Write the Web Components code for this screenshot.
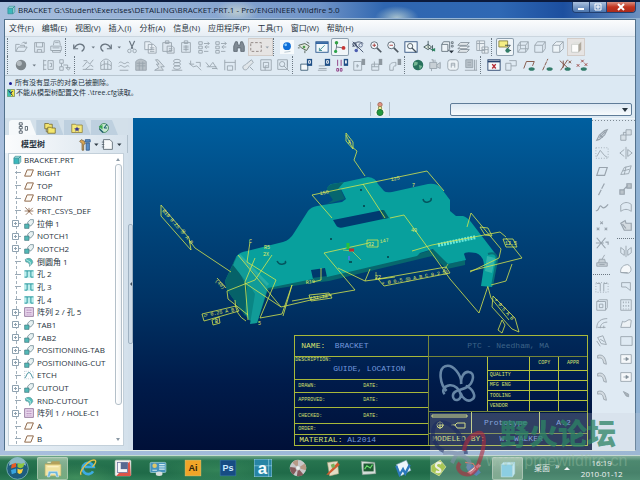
<!DOCTYPE html>
<html lang="zh-CN">
<head>
<meta charset="utf-8">
<title>BRACKET - Pro/ENGINEER Wildfire 5.0</title>
<style>
  html, body { height: 100%; }
  body {
    margin: 0;
    overflow: hidden;
    font: 8px/12px "Open Sans", "Noto Sans CJK SC", sans-serif;
    color: #26323d;
  }
</style>
</head>
<body>
<desk-top>
  <app-window slot="window"></app-window>
  <task-bar slot="bar"></task-bar>
  <forum-mark slot="mark"></forum-mark>
</desk-top>

<script>
// all icons live on a 16x16 grid; stroke follows the text colour
const ICONS = {
  open: '<path d="M2 13V5h4l1 1h5v2M2 13l3-5h10l-3 5zM9 4c1-2 4-2 5 0m0-2v2h-2" fill="none"/>',
  save: '<path d="M3 3h11v11H3zM5 3v5h7V3M6 14v-3h5v3" fill="none"/>',
  print: '<path d="M5 6l1-5h6l1 5M2 7h12v5H2zM4 12h9v2H4zM4 9h8M7 3h4" fill="none"/>',
  undo: '<path d="M2 5v5h5M3 9c2-5 9-6 11-1 0 2-1 4-3 5" fill="none" stroke="#68747f" stroke-width="1.4"/>',
  redo: '<path d="M14 5v5H9M13 9C11 4 4 3 2 8c0 2 1 4 3 5" fill="none" stroke="#68747f" stroke-width="1.4"/>',
  caret: '<path d="M5 7h7l-3.5 4z" fill="currentColor" stroke="none"/>',
  cut: '<path d="M5 1l4 9M11 1L7 10" fill="none" stroke="#68747f" stroke-width="1.4"/><circle cx="5" cy="12.500" r="2" fill="none"/><circle cx="11" cy="12.500" r="2" fill="none"/>',
  copy: '<path d="M2 2h6l2 2v7H2zM6 5h6l3 3v7H6zM8 9h5M8 11h5M8 13h5" fill="#e9f0f6"/>',
  paste: '<path d="M2 3h10v10H2zM5 1h4v3H5zM7 7h6l2 2v6H7zM9 10h4M9 12h4" fill="#dde6ee"/>',
  pasteOther: '<path d="M3 3h10v11H3zM6 1h4v3H6zM5 7h6M5 9h6M5 11h6M8 6v7" fill="none"/>',
  regen: '<path d="M2 2h4v3H2zM2 7h4v3H2zM2 12h4v3H2zM8 4h6m-2-2 2 2-2 2M8 13h5M14 8H9m2-2-2 2 2 2" fill="none"/>',
  find: '<path d="M2 13V7l2-5h2l1 4h2l1-4h2l2 5v6h-4V9H6v4z" fill="#7f8a94" stroke="#5e6973"/>',
  marquee: '<path d="M2 3h12v10H2z" fill="none" stroke="#8a7f7c" stroke-dasharray="3 2"/>',
  ball: '<rect width="16" height="16" fill="#f6fafc" stroke="none"/><circle cx="8" cy="7" r="4.500" fill="#1270d8" stroke="none"/><circle cx="6.500" cy="5.500" r="1.500" fill="#8fd0ff" stroke="none"/><path d="M5 14l7-1" stroke="#b4c3ce"/>',
  spin: '<path d="M2 6l7-2 5 3-3 5-6-3zM3 9H1M9 12v3M11 2l3 2" fill="#dfe8dc" stroke="#4b5a4c"/><circle cx="8" cy="8" r="1.500" fill="#4c9a4d" stroke="none"/>',
  orient: '<rect x="1" y="2" width="14" height="12" fill="#f2f8fb" stroke="#20508a"/><path d="M1 3.500h14" stroke="#245a9b" stroke-width="2"/><path d="M5 12l6-6M5 9v3h3" stroke="#338a8f" fill="none"/>',
  nodes: '<path d="M4 3v5l8 1M4 8l-1 5" fill="none" stroke="#60717c"/><circle cx="4" cy="3" r="2" fill="#31a043" stroke="none"/><circle cx="12" cy="9" r="2.200" fill="#c63535" stroke="none"/><circle cx="3" cy="13" r="1.800" fill="#2ba34a" stroke="none"/>',
  spinCenter: '<path d="M2 2l12 12M2 8c3-8 9-6 12-4M5 5l3 5" fill="none" stroke="#3b4965"/><circle cx="4" cy="5" r="2" fill="none" stroke="#3b4965"/><circle cx="11" cy="6" r="2" fill="none" stroke="#59688a"/><circle cx="6" cy="12" r="2" fill="#4b5cb0" stroke="none"/>',
  zoomIn: '<circle cx="6" cy="6" r="4" fill="#f4fafd" stroke="#53606b"/><path d="M4 6h4M6 4v4" stroke="#a33636"/><path d="M9 9l5 5" stroke="#4f5962" stroke-width="2"/>',
  zoomOut: '<circle cx="6" cy="6" r="4" fill="#f4fafd" stroke="#53606b"/><path d="M4 6h4" stroke="#a33636"/><path d="M9 9l5 5" stroke="#4f5962" stroke-width="2"/>',
  refit: '<rect x="1" y="2" width="14" height="12" fill="#f2f8fb" stroke="#2e4f7c"/><circle cx="7" cy="7" r="3" fill="none" stroke="#46525c"/><path d="M9 9l5 5" stroke="#46525c" stroke-width="1.600"/>',
  reorient: '<path d="M2 8l5-3 4 3-4 3zM7 1v8M7 9l7 3M12 6v7" fill="#e1ecdf" stroke="#3f5359"/><path d="M10 11l5-2v4z" fill="#2f8b64" stroke="none"/>',
  saved: '<path d="M2 5h7v8H2zM2 5l2-3h7v8l-2 3M13 2h2v2h-2zM13 6h2v2h-2z" fill="#eef4f8" stroke="#64717b"/><path d="M10 12h6l-3 3z" fill="#2a3540" stroke="none"/>',
  layers: '<path d="M4 3h10l-3 3H1zM4 7h10l-3 3H1zM4 11h10l-3 3H1z" fill="#edf2f5" stroke="#7b8790"/>',
  viewMgr: '<path d="M2 1h9v11H2zM2 4h9M5 1v11M8 8h7v7H8zM8 11h7M11 8v7" fill="#eaf0f4"/>',
  note: '<path d="M1 1h10v7H1z" fill="#f5ee84" stroke="#85803f"/><path d="M8 6h6l-5 6M12 12h3" stroke="#31434a" fill="none"/><circle cx="11" cy="12" r="2.500" fill="#317c66" stroke="none"/>',
  wire: '<path d="M2 6h9v8H2zM5 2h9v8H5zM2 6l3-4M11 6l3-4M2 14l3-4M11 14l3-4" fill="none"/>',
  hidden: '<path d="M2 6h9v8H2zM2 6l3-4h9v8l-3 4M11 6l3-4" fill="none"/>',
  noHidden: '<path d="M2 6h8v8H2zM2 6l4-4h8l-4 4M14 2v8l-4 4" fill="#edf4f8"/>',
  shade: '<path d="M3 5h8v9H3z" fill="#fdfdfc" stroke="#c4c8c5"/><path d="M3 5l3-3h8l-3 3z" fill="#e0e1de" stroke="none"/><path d="M11 5l3-3v9l-3 3z" fill="#afa99d" stroke="none"/>',
  sphere: '<circle cx="8" cy="8" r="6" fill="#7d868b" stroke="none"/><circle cx="6" cy="6" r="3" fill="#b2babf" stroke="none"/>',
  partList: '<path d="M3 2v12M3 3h3M3 8h3M3 13h3M8 3h6v10H8zM10 6h2v4h-2" fill="none"/>',
  flow: '<path d="M2 2h4v4H2zM2 10h4v4H2zM4 6v4M6 8h5v4M9 11h5l-2 3z" fill="none"/>',
  analyse: '<path d="M2 13h12M2 10l5-6 3 3 4-5M3 3h4M5 13l6-5 3 2" fill="none"/>',
  mesh: '<path d="M2 5c4-5 8-5 12 0v8H2zM2 9c4-3 8-3 12 0M6 3v10M10 3v10" fill="none"/>',
  wave: '<path d="M2 6c3-4 5 2 8 0 2-2 3-1 4 0M2 10c3-4 5 2 8 0 2-2 3-1 4 0M3 14h10" fill="none"/>',
  hatch: '<path d="M2 4c4-4 8-3 12 0v10H2z" fill="#b7c0c7"/><path d="M3 6h10M3 9h10M6 4v10M10 4v10" fill="none"/>',
  stair: '<path d="M3 14h10l-3-4h4L7 2H4l4 5H5l3 4z" fill="#d6dfe6"/>',
  coil: '<ellipse cx="8" cy="3.500" rx="4" ry="2" fill="none"/><ellipse cx="8" cy="7" rx="4" ry="2" fill="none"/><ellipse cx="8" cy="11" rx="4" ry="2" fill="none"/><path d="M2 14h12" fill="none"/>',
  dims: '<path d="M1 6l5 4 4-1 5 5M3 3v4h4M9 5h5v5" fill="none"/>',
  dims2: '<path d="M1 5l4 5 4-5 5 8M2 10h11M8 12h6" fill="none"/>',
  span: '<path d="M2 2v12M14 2v12M2 5h12M5 9h6v5H5z" fill="none"/>',
  brush: '<path d="M3 13c-3-5 2-4 4-7l5-4 2 3-5 5c-2 4-4 4-6 3zM10 10l4 4" fill="#e0e6ea"/>',
  frame: '<path d="M2 2h12v12H2zM5 5h6v6H5zM7 14v-5h3" fill="none"/>',
  frameFind: '<path d="M2 2h11v11H2z" fill="none"/><circle cx="7" cy="7" r="3" fill="none"/><path d="M9 9l6 6M13 3v7" fill="none"/>',
  flagBox: '<path d="M2 7h8v7H2z" fill="#f4f8fa" stroke="#3d5d75"/><rect x="9" y="1" width="6" height="8" fill="#1f4f86" stroke="none"/><path d="M11 3h2v3h-2z" fill="none" stroke="#fff"/>',
  flagBar: '<path d="M2 12h9M2 9h7M1 14h10" fill="none"/><rect x="9" y="1" width="6" height="8" fill="#1f4f86" stroke="none"/><path d="M11 3h2v3h-2z" fill="none" stroke="#fff"/>',
  flagDims: '<path d="M3 2v7M7 2v7M2 12h2v3H2zM6 12h2v3H6z" fill="none" stroke="#8b367f"/><rect x="10" y="1" width="5" height="8" fill="#1f4f86" stroke="none"/><path d="M12 3h1v3h-1z" fill="none" stroke="#fff"/>',
  flagDoc: '<path d="M2 4h9v10H2zM5 9h3M6 7v4" fill="none"/><rect x="11" y="1" width="4" height="7" fill="#8d979f" stroke="none"/>',
  flagGrid: '<path d="M2 7h8v7H2zM2 10h8M5 4v6" fill="none"/><rect x="10" y="1" width="4" height="7" fill="#8d979f" stroke="none"/>',
  flagPipe: '<path d="M2 14V9c0-3 3-4 7-4v4c-3 0-3 1-3 5z" fill="none"/><rect x="11" y="1" width="4" height="7" fill="#8d979f" stroke="none"/>',
  globe: '<circle cx="8" cy="8" r="6" fill="#28715d" stroke="none"/><path d="M4 4l4 1-1 3-4 1zM9 8l4 1-3 4z" fill="#75b894" stroke="none"/>',
  camera: '<path d="M2 5h8v7H2zM10 8l4-3v7l-4-2M4 2h2v3M8 2v3M4 12v3" fill="#c8d0d6"/>',
  letterBox: '<rect x="2" y="2" width="12" height="12" rx="3" fill="#edf3f6"/><path d="M6 11V6h4v5M6 8h4" fill="none"/>',
  monitor: '<path d="M2 2h8v9H2zM12 2v12M14 2v12M1 14h14M4 5h4M4 8h4" fill="#b6c0c8"/>',
  crossBox: '<rect x="1" y="2" width="14" height="12" fill="#f5f9fb" stroke="#26416b"/><path d="M1 4h14" stroke="#26416b" stroke-width="2"/><path d="M6 7l4 5M10 7l-4 5" stroke="#b52a35" stroke-width="1.600"/>',
  planes: '<path d="M2 6h6v8H2zM6 3h8v6H8" fill="none"/>',
  datumPlane: '<path d="M2 12l3-8h9l-2 5" fill="none" stroke="#7b4c3c"/><ellipse cx="11" cy="12.500" rx="3.500" ry="2" fill="#347c6b" stroke="none"/>',
  datumAxis: '<path d="M3 14L9 1" stroke="#7b4c3c" stroke-dasharray="5 1"/><ellipse cx="11" cy="12.500" rx="3.500" ry="2" fill="#347c6b" stroke="none"/>',
  datumCsys: '<path d="M2 3l10 9M11 2L3 14M6 3v8M12 3l3 3M15 3l-3 3" fill="none" stroke="#7b4c3c"/><ellipse cx="11" cy="12.500" rx="3.500" ry="2" fill="#347c6b" stroke="none"/>',
  datumPoint: '<path d="M2 7l3 3M5 7l-3 3M7 2l3 3M10 2L7 5M11 6l3 3M14 6l-3 3" stroke="#963c36"/><ellipse cx="10" cy="12.500" rx="3.500" ry="2" fill="#347c6b" stroke="none"/>',
  // feature toolbar
  chain: '<path d="M2 14l3-6 6-5 3-1-3 6-6 5zM5 11l7-7M6 8l3 3" fill="none" stroke-width="1.300"/>',
  sketch: '<path d="M1 2v12h14V2z" fill="none" stroke-dasharray="1 2"/><path d="M2 12L6 5l5 6 3 2" fill="none"/>',
  plane: '<path d="M2 13L5 4h9l-3 9z" fill="none" stroke-width="1.300"/>',
  axis: '<path d="M4 15L11 1" fill="none" stroke-dasharray="7 1" stroke-width="1.300"/>',
  curve: '<path d="M1 12c3 2 4-7 6-5s3 4 8-2" fill="none" stroke-width="1.300"/>',
  points: '<path d="M2 11l3 3M5 11l-3 3M6 4l3 3M9 4L6 7M11 11l3 3M14 11l-3 3" fill="none" stroke-width="1.200"/>',
  csys: '<path d="M2 2l10 12M12 2L2 14M1 8h9M12 7h3v3" fill="none" stroke-width="1.300"/>',
  stamp: '<path d="M2 10h12v4H2zM4 10l1-4h6l1 4M8 6l3-5M5 12h6" fill="#c5ced5"/>',
  hole: '<path d="M1 3h14v11H1z" fill="none" stroke-dasharray="1 2"/><path d="M2 4h4v9M14 4h-4v9" fill="none"/>',
  shell: '<path d="M2 4h10v10H2zM5 7h4v4H5zM2 4l3-2h9v9l-2 3" fill="none"/>',
  rib: '<path d="M2 14c0-8 5-11 12-11M6 14c0-5 4-7 8-7M10 14v-3M3 13h9" fill="none"/>',
  draft: '<path d="M3 4l6-2 4 10M3 4l4 7 6 1M2 8l4 6M6 6l5 3" fill="none"/>',
  round: '<path d="M3 4c6-2 9 2 10 10l-3-1C9 8 8 6 3 7z" fill="#d3dbe1"/>',
  boxes: '<path d="M2 8h6v6H2zM8 2h6v6H8zM5 8V5h3" fill="#d6dfe6"/>',
  mirror: '<path d="M8 1v14M6 4L1 8l5 4M10 4l5 4-5 4z" fill="none"/>',
  merge: '<path d="M2 12l4-8 8-2-3 9zM4 8l8-2M8 3l-2 9" fill="none"/>',
  move: '<path d="M1 9h5v5H1zM9 2h5v5H9zM5 9l5-5" fill="#bbc4cb" stroke-width="1.300"/>',
  bound: '<path d="M2 13V6c4-4 8-4 12-1v8c-4-3-8-3-12 0z" fill="none"/>',
  hand: '<path d="M2 6l5-3 1 3h6v8H6zM4 7l4 5" fill="#d3dbe1" stroke-width="1.300"/>',
  trimSplit: '<path d="M2 4l4 3v6l-4-3zM14 4l-4 3v6l4-3zM8 2v13" fill="none"/>',
  disc: '<path d="M2 12c-1-5 3-9 8-9 5 2 5 9 0 10zM2 12h8" fill="#f5f8fa"/>',
  corner: '<path d="M3 3h10v9l-5-4H3z" fill="none"/>',
  pattern: '<path d="M2 2h12v12H2z" fill="none"/><path d="M5 4v9M8 4v9M11 4v9" fill="none" stroke-dasharray="2 2"/>',
  patch: '<path d="M2 13l2-7c4 3 6-4 10-1l-1 8z" fill="#edf2f5"/>',
  rect: '<path d="M2 3h13v10H2z" fill="none"/>',
  arrowBox: '<path d="M2 3h12v10H2z" fill="#f5f8fa"/><path d="M5 8h5M8 6l3 2-3 2z" fill="#4a5964"/>',
  arrow: '<path d="M5 4l6 3v3L8 9z" fill="#a7b1b8"/>',
  // model tree
  tTree: '<path d="M3 1h4v3H3zM3 6h4v3H3zM3 12h4v3H3zM11 6h3v5h-3z" fill="#fff" stroke="#354450"/><path d="M5 4v2M5 9v3" stroke="#354450"/>',
  tFolders: '<path d="M1 2h5l1 1h4v6H1z" fill="#f2e36f" stroke="#706429"/><path d="M5 7h4l1 1h5v7H5z" fill="#f4e76d" stroke="#706429"/><path d="M3 9v4h2" fill="none" stroke="#706429"/>',
  tFav: '<path d="M1 3h5l1 1h8v10H1z" fill="#f3e77a" stroke="#8b7c36"/><path d="M8 6l1 2 3 1-2 1v3l-2-2-2 2v-3L4 9l3-1z" fill="#3e3b8d" stroke="none"/>',
  tHist: '<circle cx="8" cy="8" r="6" fill="#c7e9cf" stroke="#2e7b4a"/><path d="M8 8l4-5M8 8h4M2 9l5 5" fill="none" stroke="#1f5e75" stroke-width="1.500"/><path d="M1 6l5-2v6z" fill="#33a64c" stroke="none"/>',
  tools: '<path d="M5 15V7L2 4l2-2 4 2 1 3-2 1v7z" fill="#d9a452" stroke="#766344"/><path d="M10 6h4v9h-4zM9 2h6v3H9z" fill="#5a8ec9" stroke="#315989"/>',
  sheet: '<path d="M3 2h8l3 3v9H3z" fill="#f8fafb" stroke="#54616b"/><path d="M1 5h3M1 8h3M1 11h3" stroke="#54616b"/>',
  part: '<path d="M3 5h8v9H3z" fill="#3bb8bb" stroke="#2d8791"/><path d="M3 5l2-3h9l-3 3zM11 5l3-3v9l-3 3z" fill="#a5e1df" stroke="#2d8791"/>',
  tPlane: '<path d="M1 13L5 3h10l-4 10z" fill="#fdfaf5" stroke="#8a6142" stroke-width="1.500"/>',
  tCsys: '<path d="M2 2l11 12M14 3L3 14M1 8h14M8 3v7" fill="none" stroke="#7b5234" stroke-width="1.200"/>',
  tProt: '<path d="M6 9V5l4-4h5v5l-4 5H8" fill="#e8f2f3" stroke="#4c6d7a"/><path d="M1 8h7v7H1z" fill="#53b8b6" stroke="#3e7079"/>',
  tRound: '<path d="M2 4c6-4 12-1 12 5l-5 6c0-5-2-7-6-7z" fill="#54c0ba" stroke="#538c92"/><path d="M3 4l7 4v6" fill="none" stroke="#e6f6f6"/>',
  tHole: '<path d="M0 2h16v12H0z" fill="#bfeeed" stroke="none"/><path d="M1 3h4v10H1M15 3h-4v10h4M5 3h6" fill="none" stroke="#24939b" stroke-width="1.500"/>',
  tPattern: '<path d="M1 1h14v14H1z" fill="#ead8ee" stroke="#6a4275"/><path d="M5 4v9M8 4v9M11 4v9" stroke="#75377d" stroke-dasharray="2 2"/>',
  tEtch: '<path d="M1 2h14v12H1z" fill="none" stroke="#7d98ab" stroke-dasharray="1 2"/><path d="M1 13C4 12 4 4 8 4s4 8 7 9" fill="none" stroke="#2f8394" stroke-width="1.400"/>',
  light: '<path d="M5 1h6v5l3 5v4H2v-4l3-5z" fill="#f2f5ec" stroke="none"/><circle cx="8" cy="3" r="2.500" fill="#e49482" stroke="#9a685e"/><circle cx="8" cy="7" r="2" fill="#f1ed9c" stroke="#8c8c4b"/><circle cx="8" cy="12" r="3.500" fill="#22993f" stroke="#1e6e34"/>',
  warn: '<path d="M1 1h14v14H1z" fill="#efe647" stroke="#3c5b32"/><path d="M1 1h7v14H1z" fill="#40bfb3" stroke="none"/><path d="M3 3l8 10M11 4l-3 4" stroke="#171f5d" stroke-width="2"/>',
  // task bar
  orb: '<circle cx="8" cy="8" r="7.500" fill="#1e5d7d" stroke="#8bc2c3" stroke-width=".5"/><path d="M2 6a6 6 0 0112 0c-4-2-8-2-12 0z" fill="#8bbac4" stroke="none"/><path d="M4 5l3-1v3L3.500 8z" fill="#e65b25" stroke="none"/><path d="M8 4c1 1 3 1 5 0l-1 3c-1 1-3 1-4 0z" fill="#8dc63f" stroke="none"/><path d="M3.500 9L7 8v3l-3 1z" fill="#38a4e0" stroke="none"/><path d="M8 8c1 1 3 1 4 0l-1 3c-1 1-2 1-3 0z" fill="#f9cf3c" stroke="none"/>',
  explorer: '<path d="M1 3h5l1-2h7v4H1z" fill="#b4a15b" stroke="none"/><path d="M1 4h14v10H1z" fill="#f1e3a0" stroke="#cbb86a" stroke-width=".5"/><path d="M3 6h10M3 2h3" stroke="#fff8ce"/><path d="M3 15l1-5h8l1 5h-2l-1-3H6l-1 3z" fill="#6fb7dd" stroke="#e3f3f7" stroke-width=".5"/>',
  ie: '<path d="M12.500 11A5 5 0 1113 7H5" fill="none" stroke="#3cabe1" stroke-width="2.400"/><path d="M2 14C-1 12 9 0 14 1c2 1 0 4-2 6" fill="none" stroke="#e9c146" stroke-width="1.200"/>',
  office: '<rect x="1" y="1" width="14" height="14" rx="1" fill="#f3f0ef" stroke="#ded7d5" stroke-width=".5"/><path d="M14 2l1 13H2z" fill="#dd5448" stroke="none"/><rect x="3" y="3" width="9" height="9" fill="#f6f6f8" stroke="#6d739c" stroke-width=".7"/><rect x="6" y="3" width="6" height="6" fill="#596a91" stroke="none"/>',
  panel: '<rect x="1" y="3" width="14" height="9" rx="1" fill="#4693bd" stroke="#b1d9df" stroke-width=".6"/><circle cx="5" cy="6" r="2" fill="#dfc76a" stroke="none"/><path d="M9 5h5M9 7h5M9 9h5M3 10h4" stroke="#d4edef"/><ellipse cx="9" cy="13" rx="3" ry="2" fill="#d8dfdc" stroke="none"/>',
  ai: '<rect x="1" y="1" width="14" height="14" fill="#f1a528" stroke="#e5c46c" stroke-width=".5"/><text x="8" y="11" font-size="8" text-anchor="middle" fill="#322409" stroke="none" font-weight="bold">Ai</text>',
  ps: '<rect x="1" y="1" width="14" height="14" fill="#174c84" stroke="#3a79a6" stroke-width=".5"/><text x="8" y="11" font-size="8" text-anchor="middle" fill="#cceaff" stroke="none" font-weight="bold">Ps</text>',
  ais: '<rect x="0" y="0" width="16" height="16" fill="#2784a5" stroke="#c4e7ec" stroke-width=".6"/><path d="M0 6h16M13 0v16" stroke="#a8dce8" stroke-width=".5"/><text x="7.500" y="13" font-size="15" text-anchor="middle" fill="#f4fbfd" stroke="none" font-weight="bold">a</text>',
  cd: '<circle cx="8" cy="8" r="7" fill="#c9c7c9" stroke="#ede8e9" stroke-width=".5"/><path d="M8 8L3 3a7 7 0 015-2zM8 8l6-4a7 7 0 011 6z" fill="#b79a87" stroke="none"/><path d="M8 8l5 6a7 7 0 01-6 1zM8 8L1 7a7 7 0 003 7z" fill="#835a5b" stroke="none"/><circle cx="8" cy="8" r="2" fill="#edf0ee" stroke="#b4b9ba" stroke-width=".5"/>',
  paint: '<path d="M3 3l9-1 1 11-8 2z" fill="#e2dcc5" stroke="#a99f78" stroke-width=".5"/><path d="M2 14L12 3l2 2-10 9z" fill="#cf5b2f" stroke="none"/><path d="M6 5l3-1 1 3-3 1z" fill="#77b05b" stroke="none"/>',
  screen: '<path d="M2 2l12 1 1 10-12 1z" fill="#d4ddd8" stroke="#7d8f86" stroke-width=".5"/><rect x="4" y="4" width="9" height="7" fill="#1f5a34" stroke="none"/><path d="M5 9l2-3 3 2 2-3" fill="none" stroke="#6be06c"/>',
  writer: '<path d="M2 5l9-4 4 9-9 5z" fill="#edf6fb" stroke="#84a8c2" stroke-width=".5"/><path d="M2 6l3 8 3-5 2 4 4-8" fill="none" stroke="#2c79bd" stroke-width="2"/>',
  sogou: '<path d="M2 6l8-5 5 6-6 8-7-4z" fill="#9ec52b" stroke="#e6ee9c" stroke-width=".6"/><path d="M11 4C7 2 4 6 8 8s2 5-2 3" fill="none" stroke="#f7fae0" stroke-width="2"/>',
  winger: '<path d="M2 4l8 2 5 6-4 3-8-5z" fill="#346fa9" stroke="none"/><path d="M3 12l10-8 2 2-9 8z" fill="#e9eef0" stroke="#b9504a" stroke-width=".7"/><path d="M1 3l7 1 4 6" stroke="#d86149" fill="none"/>',
  proe: '<path d="M2 4h10v11H2z" fill="#79cfe5" stroke="#cfedf1" stroke-width=".5"/><path d="M2 4l2-2h10l-2 2zM12 4l2-2v10l-2 3z" fill="#c2eff3" stroke="#9adcea" stroke-width=".4"/>'
};

// attaches an open shadow root holding the given styles and markup
class Base extends HTMLElement {
  draw(css, html) {
    if (!this.shadowRoot) this.attachShadow({ mode: "open" });
    this.shadowRoot.innerHTML = `<style>*{box-sizing:border-box}${css}</style>${html}`;
  }
}

class UiIcon extends Base {
  connectedCallback() {
    this.draw(
      `:host { display: block; width: 14px; height: 14px; flex: none; }
       svg { display: block; width: 100%; height: 100%; font-family: "Liberation Sans", sans-serif; }`,
      `<svg viewBox="0 0 16 16" stroke="currentColor" aria-hidden="true">${ICONS[this.getAttribute("name")] || ""}</svg>`
    );
  }
}
customElements.define("ui-icon", UiIcon);

class ToolButton extends Base {
  connectedCallback() {
    const icon = this.getAttribute("icon");
    this.draw(
      `:host { display: flex; flex: 1 1 0; min-width: 0; color: #98a3ad; }
       :host([small]) { flex-grow: .5; color: #6f7a84; }
       :host([wide]) { flex-grow: 1.4; }
       button { all: unset; flex: 1; min-width: 0; height: 18px; display: flex; align-items: center; justify-content: center; overflow: hidden; }
       :host([pressed]) button { box-shadow: inset 0 0 0 1px #8d9fae; border-radius: 2px; background: #f0f5f8; }
       :host([soft]) button { box-shadow: inset 0 0 0 1px #d3cdc9; background: #e6e4e3; }
       :host([small]) ui-icon, .more { width: 8px; height: 8px; }`,
      `<button type="button" aria-label="${icon}"><ui-icon name="${icon}"></ui-icon>${
        this.hasAttribute("wide") ? '<ui-icon class="more" name="caret"></ui-icon>' : ""
      }</button>`
    );
  }
}
customElements.define("tool-button", ToolButton);

// items: icon names, "|" for a dotted grip, suffixes ! pressed, ~ soft, + with caret
class ToolBar extends Base {
  connectedCallback() {
    const items = this.getAttribute("items").split(" ").map(i => {
      if (i === "|") return "<i></i>";
      const name = i.replace(/[!~+]/g, "");
      const flags = [
        i.includes("!") ? "pressed" : "", i.includes("~") ? "soft" : "",
        i.includes("+") ? "wide" : "", name === "caret" ? "small" : ""
      ].join(" ");
      return `<tool-button icon="${name}" ${flags}></tool-button>`;
    }).join("");
    this.draw(
      `:host { display: flex; height: 18px; align-items: stretch; }
       i { flex: 0 0 5px; border-left: 1px dotted #6b7883; }`,
      items
    );
  }
}
customElements.define("tool-bar", ToolBar);

class WindowTitle extends Base {
  connectedCallback() {
    this.draw(
      `:host {
         display: flex; height: 18px; padding-left: 6px; align-items: center; color: #101c33; white-space: nowrap;
         background:
           radial-gradient(ellipse 22px 12px at 37% 60%, #d5dfd0aa, transparent),
           radial-gradient(ellipse 22px 12px at 62% 100%, #c5d8d5cc, transparent),
           linear-gradient(90deg, #a9bfdd 0, #8fabd3 30%, #6f93c7 50%, #2f66b0 60%, #2f68b4 78%, #1c4f9f 88%, #6b90c0 100%);
         border-top: 2px solid #0b1a3c;
       }
       ui-icon { width: 10px; height: 10px; margin-right: 2px; }
       h1 { font-size: 8px; font-weight: normal; margin: 0; flex: 1; }
       .ctl { display: flex; align-self: flex-start; border: 1px solid #213f70; border-top: 0; border-radius: 0 0 4px 4px; overflow: hidden; margin-right: 4px; }
       button { all: unset; width: 16px; height: 10px; display: grid; place-items: center; background: linear-gradient(#a9c0de, #4a74ac); border-right: 1px solid #24447a; color: #fff; }
       button:last-child { width: 28px; border: 0; background: linear-gradient(#d98f80, #c0331f 50%, #a82b1c); }
       svg { display: block; width: 8px; height: 8px; }`,
      `<ui-icon name="part"></ui-icon>
       <h1>BRACKET G:\\Student\\Exercises\\DETAILING\\BRACKET.PRT.1 - Pro/ENGINEER Wildfire 5.0</h1>
       <div class="ctl">
         <button type="button" aria-label="minimise"><svg viewBox="0 0 8 8"><path d="M1 5h6v2H1z" fill="#fff"/></svg></button>
         <button type="button" aria-label="restore"><svg viewBox="0 0 8 8"><path d="M1 1h6v6H1zM3 3h2v2H3z" fill="none" stroke="#fff"/></svg></button>
         <button type="button" aria-label="close"><svg viewBox="0 0 8 8"><path d="M1 1l6 6M7 1L1 7" stroke="#fff" stroke-width="2"/></svg></button>
       </div>`
    );
  }
}
customElements.define("window-title", WindowTitle);

class MenuBar extends Base {
  connectedCallback() {
    const menus = ["文件(F)", "编辑(E)", "视图(V)", "插入(I)", "分析(A)", "信息(N)", "应用程序(P)", "工具(T)", "窗口(W)", "帮助(H)"];
    this.draw(
      `:host { display: flex; height: 17px; gap: 8px; padding: 0 4px; align-items: center; background: linear-gradient(#fbfcfd, #e6edf4); border-bottom: 1px solid #cbd6df; }
       button { all: unset; white-space: nowrap; }`,
      menus.map(m => `<button type="button">${m}</button>`).join("")
    );
  }
}
customElements.define("menu-bar", MenuBar);

class MessageLog extends Base {
  connectedCallback() {
    this.draw(
      `:host { display: block; height: 43px; border-top: 1px solid #b9c6d0; margin-top: 1px; position: relative; }
       p { margin: 0; font-size: 7px; line-height: 10px; height: 10px; display: flex; align-items: center; gap: 1px; padding-left: 2px; white-space: nowrap; }
       p:first-of-type { margin-top: 2px; }
       b { width: 3px; height: 3px; border-radius: 50%; background: #1a1a94; margin: 0 2px; }
       ui-icon { width: 8px; height: 8px; }
       .row { display: flex; align-items: center; justify-content: flex-end; height: 14px; margin-top: 4px; gap: 60px; padding-right: 3px; }
       .light { border: solid #aebbc5; border-width: 0 1px; padding: 0 2px; }
       .light ui-icon { width: 14px; height: 14px; }
       select { appearance: none; width: 29%; height: 13px; font: inherit; border: 1px solid #5f7c98; border-radius: 2px; background: linear-gradient(#dce8f3, #f6fafc); padding: 0; }
       .drop { position: absolute; right: 7px; bottom: 6px; border: 3px solid transparent; border-top: 4px solid #26333e; border-bottom: 0; }`,
      `<p><b></b>所有没有显示的对象已被删除。</p>
       <p><ui-icon name="warn"></ui-icon>不能从模型树配置文件 .\\tree.cfg读取。</p>
       <div class="row">
         <span class="light"><ui-icon name="light"></ui-icon></span>
         <select aria-label="filter"><option></option></select>
       </div>
       <span class="drop"></span>`
    );
  }
}
customElements.define("message-log", MessageLog);

class TreeNode extends Base {
  connectedCallback() {
    this.draw(
      `:host { display: flex; flex: 1 1 0; min-height: 0; align-items: center; gap: 3px; padding-left: 3px; white-space: nowrap; color: #26323d; }
       :host([root]) { gap: 2px; }
       ui-icon { width: 10px; height: 10px; }
       .twig { width: 9px; height: 7px; background: linear-gradient(#9aa9b5, #9aa9b5) 100% 3px / 6px 1px no-repeat; }
       .twig svg { display: block; width: 7px; height: 7px; }`,
      (this.hasAttribute("root") ? "" :
        `<span class="twig">${
          this.hasAttribute("plus") ? '<svg viewBox="0 0 7 7"><path d="M.5.5h6v6h-6zM2 3.500h3M3.500 2v3" fill="#fff" stroke="#8fa2b0"/></svg>' : ""}</span>`) +
      `<ui-icon name="${this.getAttribute("icon")}"></ui-icon><slot></slot>`
    );
  }
}
customElements.define("tree-node", TreeNode);

class ModelTree extends Base {
  connectedCallback() {
    const rows = [
      ["tPlane", "RIGHT"], ["tPlane", "TOP"], ["tPlane", "FRONT"], ["tCsys", "PRT_CSYS_DEF"],
      ["tProt", "拉伸 1", 1], ["tProt", "NOTCH1", 1], ["tProt", "NOTCH2", 1], ["tRound", "倒圆角 1"],
      ["tHole", "孔 2"], ["tHole", "孔 3"], ["tHole", "孔 4"], ["tPattern", "阵列 2 / 孔 5", 1],
      ["tProt", "TAB1", 1], ["tProt", "TAB2", 1], ["tProt", "POSITIONING-TAB", 1],
      ["tProt", "POSITIONING-CUT", 1], ["tEtch", "ETCH"], ["tProt", "CUTOUT", 1],
      ["tRound", "RND-CUTOUT"], ["tPattern", "阵列 1 / HOLE-C1", 1], ["tPlane", "A"], ["tPlane", "B"]
    ];
    this.draw(
      `:host { display: flex; width: 128px; flex: none; min-height: 0; background: linear-gradient(90deg, #e9f0f6, #d3e0eb); }
       .panel { flex: 1; display: flex; flex-direction: column; min-height: 0; min-width: 0; padding-bottom: 4px; }
       nav { display: flex; height: 17px; padding: 2px 10px 0 4px; background: #d3e0ea; }
       nav button { all: unset; flex: 1; display: grid; place-items: center; background: #bed0df; clip-path: polygon(0 0, 78% 0, 100% 100%, 0 100%); }
       nav button:first-child { background: #f6f9fb; border-radius: 3px 0 0 0; }
       nav ui-icon { width: 12px; height: 12px; }
       header { display: flex; align-items: center; height: 18px; padding: 0 3px 0 16px; background: linear-gradient(90deg, #fbfcfd, #d6e2ec); border-right: 1px solid #b2c1cd; }
       h2 { margin: 0; flex: 1; font-size: 8px; font-weight: bold; }
       header button { all: unset; display: flex; align-items: center; }
       header ui-icon { width: 13px; height: 13px; }
       header ui-icon + ui-icon { width: 10px; height: 10px; color: #2f3b45; }
       .box { flex: 1; display: flex; min-height: 0; margin: 0 4px 0 3px; background: #fff; border: 1px solid #c3d0da; }
       .rows { flex: 1; display: flex; flex-direction: column; min-width: 0; overflow: hidden; background: repeating-linear-gradient(#a3b1bc 0 3px, #fff 3px 5px) 7px 12px / 1px 97% no-repeat; }
       .bar { width: 8px; margin: 1px; display: flex; flex-direction: column; align-items: center; gap: 3px; padding: 3px 0; }
       .bar s { border: 2px solid transparent; border-bottom: 3px solid #8a98a4; border-top: 0; }
       .bar s:last-child { border-top: 3px solid #8a98a4; border-bottom: 0; }
       .thumb { width: 7px; flex: 0 1 85%; margin-bottom: auto; border: 1px solid #b4c0c9; border-radius: 3px; background: linear-gradient(90deg, #fff, #f0f3f6); }
       .sash { width: 5px; display: flex; align-items: center; background: #d2dfea; }
       .sash span { width: 5px; height: 36%; border: 1px solid #9fb1c1; border-radius: 2px; background: #cddbe7; display: grid; place-items: center; }
       .sash em { border: 2px solid transparent; border-right: 2px solid #42515e; border-left: 0; }`,
      `<div class="panel">
         <nav>${["tTree", "tFolders", "tFav", "tHist"].map(i => `<button type="button" aria-label="${i}"><ui-icon name="${i}"></ui-icon></button>`).join("")}</nav>
         <header><h2>模型树</h2>
           <button type="button" aria-label="settings"><ui-icon name="tools"></ui-icon><ui-icon name="caret"></ui-icon></button>
           <button type="button" aria-label="show"><ui-icon name="sheet"></ui-icon><ui-icon name="caret"></ui-icon></button>
         </header>
         <div class="box">
           <div class="rows"><tree-node root icon="part">BRACKET.PRT</tree-node>
             ${rows.map(([i, t, p]) => `<tree-node icon="${i}" ${p ? "plus" : ""}>${t}</tree-node>`).join("")}
           </div>
           <div class="bar"><s></s><div class="thumb"></div><s></s></div>
         </div>
       </div>
       <div class="sash"><span><em></em></span></div>`
    );
  }
}
customElements.define("model-tree", ModelTree);

const PTC_LOGO = '<path d="M12 44C2 34-2 10 10 5c12-4 26 14 25 28M35 33c-1-10 4-20 12-19 10 1 8 17-3 24-8 5-22 4-22 14 0 9 14 8 12-3-1-7-9-15-17-14-9 1-13 9-8 14M34 47c2 7 10 15 17 11 9-4 3-18-9-22" fill="none" stroke="currentColor" stroke-width="4"/>';

class TitleBlock extends Base {
  connectedCallback() {
    this.draw(
      `:host { display: flex; font: 8px/10px "Liberation Mono", monospace; color: #d6e070; border: 1px solid #a8b83a; white-space: pre; --line: 1px solid #75863a; }
       .left { flex: 135; display: flex; flex-direction: column; border-right: var(--line); }
       .right { flex: 160; display: flex; flex-direction: column; min-width: 0; }
       .left > div { border-bottom: 1px solid #a8b83a; display: flex; align-items: center; padding-left: 3px; }
       .left > div:last-child { border: 0; padding-left: 4px; }
       .small { font-size: 5px; line-height: 6px; }
       .small span { flex: 1; }
       em { font-style: normal; color: #7398dd; }
       .left > .desc { display: block; padding: 0; }
       .desc p { margin: 0; }
       .desc em { display: block; padding: 1px 0 0 38px; }
       .ptc { height: 21px; text-align: center; line-height: 20px; color: #3d6488; border-bottom: var(--line); }
       .mid { display: flex; height: 55px; border-bottom: var(--line); }
       .logo { flex: 58; display: grid; place-items: center; color: #6686a6; }
       .logo svg { width: 40px; height: 42px; }
       table { flex: 101; border-collapse: collapse; font-size: 5px; line-height: 6px; }
       th, td { font-weight: normal; border: 1px solid #b6c43f; border-right: 0; border-bottom: 0; padding: 0 2px; text-align: left; vertical-align: middle; height: 10px; width: 28%; }
       th:first-child { width: 42%; }
       thead th { border-top: 0; text-align: center; height: 13px; }
       .cells { flex: 1; display: flex; border-bottom: var(--line); }
       .cells span { flex: 68; display: grid; place-items: center; color: #7398dd; border-left: 1px solid #c2cf7b; }
       .cells span:first-child { flex: 43; border: 0; color: #d6e070; }
       .cells span:last-child { flex: 48; }
       .cells svg { width: 38px; height: 20px; }
       .by { height: 11px; line-height: 10px; padding-left: 3px; }`,
      `<div class="left">
         <div style="height:21px;padding-left:6px">NAME:  <em>BRACKET</em></div>
         <div class="desc" style="height:23px"><p class="small">DESCRIPTION:</p><em>GUIDE, LOCATION</em></div>
         <div class="small" style="height:13px"><span>DRAWN:</span><span>DATE:</span></div>
         <div class="small" style="height:15px"><span>APPROVED:</span><span>DATE:</span></div>
         <div class="small" style="height:16px"><span>CHECKED:</span><span>DATE:</span></div>
         <div class="small" style="height:11px">ORDER:</div>
         <div style="height:10px">MATERIAL: <em>AL2014</em></div>
       </div>
       <div class="right">
         <div class="ptc">PTC - Needham, MA</div>
         <div class="mid">
           <div class="logo"><svg viewBox="0 0 60 66">${PTC_LOGO}</svg></div>
           <table>
             <thead><tr><th></th><th>COPY</th><th>APPR</th></tr></thead>
             <tbody>${["QUALITY", "MFG ENG", "TOOLING", "VENDOR"].map(t => `<tr><th>${t}</th><td></td><td></td></tr>`).join("")}</tbody>
           </table>
         </div>
         <div class="cells">
           <span><svg viewBox="0 0 38 20" fill="none" stroke="currentColor"><path d="M1 2h35v2H1zM20 12h4l2-2h8v5h-8l-2-3"/><circle cx="9" cy="12" r="3"/><path d="M5 12h8M9 8v8"/></svg></span>
           <span>Prototype</span><span>A.2</span>
         </div>
         <div class="by">MODELED BY:   <em>W. WALKER</em></div>
       </div>`
    );
  }
}
customElements.define("title-block", TitleBlock);

class CadView extends Base {
  connectedCallback() {
    this.draw(
      `:host { display: block; flex: 1; min-width: 0; position: relative; overflow: hidden; background: linear-gradient(#005f9f, #004a82 25%, #003365 55%, #001b4a 80%, #001038); }
       .scene { position: absolute; inset: 0; width: 100%; height: 100%; font-family: "Liberation Mono", monospace; }
       title-block { position: absolute; right: 4px; bottom: 4px; width: 64%; }`,
      `<svg class="scene" viewBox="133 118 459 332" preserveAspectRatio="xMidYMid meet" role="img" aria-label="bracket model">
        <!-- left flange, inner side -->
        <path d="M236 257l-11 24 2 9 22 30 8 3 11-34 1-20z" fill="#0a8584"/>
        <path d="M234 262l-9 19 2 9 18 26 2-29z" fill="#066269"/>
        <!-- thickness below the plate -->
        <path d="M268 286L312 278 327 276 418 254 434 249 448 264 465 260V265L447 269 432 256 329 281 312 283 268 290z" fill="#07676d"/>
        <!-- plate -->
        <path d="M236 257Q239 252 247 251L283 242Q290 240 294 233L308 211Q311 207 317 206L342 202 346 199 341 189 328 191Q326 186 332 184L345 182 368 177Q376 178 378 184L384 191Q386 193 392 192L428 184Q437 183 441 188L450 200V211L456 216 463 216Q467 217 471 222L494 252Q498 257 497 262L492 287 481 286 484 266Q484 256 476 253 465 251 464 254L466 260 448 264 433 249 420 253 417 256 327 277 325 268 311 270 313 279 268 288z" fill="#08a09d"/>
        <path d="M238 255l30 31-11 37-7 1 5-30-3-5-19-24z" fill="#119b98"/>
        <path d="M239 255l29 30" stroke="#3bb8ac" stroke-width="3" opacity=".6"/>
        <path d="M488 254q9-3 9 6l-5 26" fill="none" stroke="#077078" stroke-width="2"/>
        <path d="M487 256l8 2-3 15-7-2z" fill="#2fb5ab"/>
        <!-- window cut out of the plate -->
        <path d="M333 220L383 210 388 218 345 227Q338 229 336 225z" fill="#003b70"/>
        <path d="M380 211l4-1 5 8-6 1z" fill="#065b65"/>
        <path d="M327 191Q326 186 332 184L344 182 338 189 341 190 345 199 327 204 333 200z" fill="#06666f"/>
        <path d="M423 199q1 4 5 3t3-4M277 261q2 4 6 3t2-3" fill="none" stroke="#04555f" stroke-width="1.500"/>
        <path d="M360 190h2M363 206h2M387 257h2M349 262h3M330 239h2" stroke="#05555c" stroke-width="2"/>
        <path d="M438 245l38-8" stroke="#67e9dd" stroke-width="4" stroke-dasharray="2 1"/>
        <!-- dimension lines -->
        <g fill="none" stroke="#d5e64e" stroke-width=".8">
          <path d="M312 195l115-24 17 20M312 195l20 23M346 135l6 12 5 4-3 9 11 16M346 133l7 9v7l-7-8zM363 184l22 34M390 218l14-3 27 37 19 27 29 34 9-27M412 251l20-6 68-13 6 5M471 213l30 36-2 9-29 14M471 213l-4 14M506 238l16 20-52 13M512 264l-6 17-15 4"/>
          <path d="M324 253l45-10M324 253l31 37-63 11M292 285l-9 31M321 268v12l-8 2M338 268l27 13 30-4M365 281l5-12M378 279l68-12 4 6-66 13zM488 287l3 11 18 22M493 296l22 22 4 14-7-3-20-22zM502 320l3 5-3 8-4-3z"/>
          <path d="M161 205l28 33 2 12-30-34zM189 240l6 8 36 24M250 242l-3 20 29 18-16 38M272 255l-17 25-28 11M227 291l1 8 20 16M245 283l36 24M238 255l43 52 51-12M255 258l-10 24 3 38M202 314l34-8 3 5-35 10zM212 320l7-3 1 6-7 2zM260 318l22-4 10-29M235 300q0 15 11 21M217 278l9 10"/>
          <path d="M367 240h11v7h-11zM480 227l8 1 4 8-7-1zM503 239h10l4 8h-11zM309 295l20-2 3 5-21 3z"/>
          <path d="M343 250l9 1 9 9M376 272v8M448 264l-5 8" stroke-width=".6"/>
        </g>
        <g fill="#e3ee65" font-size="5">
          <text x="391" y="181" transform="rotate(-11 391 181)">125</text>
          <text x="320" y="195" transform="rotate(-11 320 195)">150</text>
          <text x="411" y="232">40</text>
          <text x="368" y="246">32</text>
          <text x="380" y="243" transform="rotate(-10 380 243)">147</text>
          <text x="310" y="300" transform="rotate(-8 310 300)">131.13</text>
          <text x="306" y="284" transform="rotate(-8 306 284)">R10</text>
          <text x="505" y="245">12.5</text>
          <text x="382" y="285" transform="rotate(-10 382 285)">⌖ Ø 0.5 Ⓜ A B C 0.2 Ⓜ</text>
          <text x="162" y="211" transform="rotate(49 162 211)">Ø10 0.25 Ⓜ A B</text>
          <text x="204" y="317" transform="rotate(-11 204 317)">⏥ 0.25 A B</text>
          <text x="494" y="300" transform="rotate(49 494 300)">⌖ 0.5 A B</text>
          <text x="249" y="243">C</text><text x="264" y="249">R5</text><text x="263" y="256">2X</text>
          <text x="215" y="281" transform="rotate(45 215 281)">(40)</text>
          <text x="348" y="144">A</text><text x="215" y="323">B</text><text x="412" y="187">7</text>
          <text x="258" y="325">5</text><text x="375" y="279">22</text>
        </g>
        <!-- spin centre -->
        <path d="M348 249v-6" stroke="#27c23b" stroke-width="3"/>
        <path d="M349 250h5" stroke="#bd2f31" stroke-width="3"/>
        <path d="M349 256v4" stroke="#3e7fe0" stroke-width="2"/>
      </svg>
      <title-block></title-block>`
    );
  }
}
customElements.define("cad-view", CadView);

class SideTools extends Base {
  connectedCallback() {
    const col = names => `<div>${names.split(" ").map(n => n === "|" ? "<hr>" : `<tool-button icon="${n}"></tool-button>`).join("")}</div>`;
    this.draw(
      `:host { display: flex; flex: none; width: 43px; padding: 7px 1px 0; background: #dfeaf3; justify-content: space-between; border-top: 1px solid #eff5f9; background-image: repeating-linear-gradient(90deg, #7d8993 0 1px, transparent 1px 3px); background-size: 100% 1px; background-repeat: no-repeat; background-position: 0 1px; }
       div { display: flex; flex-direction: column; width: 17px; }
       tool-button { flex: none; }
       hr { width: 100%; margin: 4px 0 3px; border: 0; border-top: 1px dotted #6b7883; }`,
      col("chain sketch plane axis curve points csys stamp | hole shell rib draft round round round") +
      col("boxes mirror merge move bound hand | trimSplit disc corner pattern patch rect arrowBox arrowBox arrow")
    );
  }
}
customElements.define("side-tools", SideTools);

class AppWindow extends Base {
  connectedCallback() {
    this.draw(
      `:host { display: flex; flex-direction: column; height: 100%; background: linear-gradient(90deg, #a9bfdd, #8fb1d2); }
       .body { flex: 1; display: flex; flex-direction: column; min-height: 0; margin: 1px 4px 4px; border: 1px solid #52718c; border-bottom-color: #e2eee8; background: #dce9f3; }
       .one { padding-right: 8%; }
       .two { padding-right: 7%; }
       .bars { padding: 1px 0 0 2px; background: #dfeaf3; }
       .work { flex: 1; display: flex; min-height: 0; }
       menu-bar { flex: none; }
       message-log { flex: none; }`,
      `<window-title></window-title>
       <div class="body">
         <menu-bar></menu-bar>
         <div class="bars">
           <tool-bar class="one" items="| open save print | undo caret redo caret cut copy paste pasteOther regen regen find marquee~+ | ball spin orient nodes! spinCenter zoomIn zoomOut refit reorient saved layers viewMgr | note! wire hidden noHidden shade~"></tool-bar>
           <tool-bar class="two" items="| sphere caret partList flow | analyse mesh wave hatch stair coil dims dims2 span brush frame frameFind | flagBox flagBar flagDims flagDoc flagGrid flagPipe | globe camera letterBox monitor | crossBox planes datumPlane datumAxis datumCsys datumPoint"></tool-bar>
         </div>
         <message-log></message-log>
         <div class="work"><model-tree></model-tree><cad-view></cad-view><side-tools></side-tools></div>
       </div>`
    );
  }
}
customElements.define("app-window", AppWindow);

class TaskBar extends Base {
  connectedCallback() {
    const apps = ["orb", "explorer", "ie", "office", "panel", "ai", "ps", "ais", "cd", "paint", "screen", "writer", "sogou", "winger", "proe"];
    const open = ["explorer", "proe"];
    this.draw(
      `:host { display: flex; height: 24px; align-items: stretch; color: #eef6f0; border-top: 1px solid #c5ddd0;
         background: radial-gradient(ellipse 60px 12px at 34% 60%, #3d8f5faa, transparent), radial-gradient(ellipse 50px 14px at 12% 90%, #4c9a62aa, transparent), linear-gradient(#6fa78a, #27744f 20%, #1f6a48 70%, #2c7a55); }
       button { all: unset; flex: 0 1 35px; display: grid; place-items: center; }
       .open { background: linear-gradient(#d4e3cd99, #c5dbb066); box-shadow: inset 0 0 0 1px #c9dccb88; border-radius: 2px; margin: 1px 2px 0; flex-basis: 31px; }
       ui-icon { width: 18px; height: 18px; }
       .orb ui-icon { width: 23px; height: 23px; }
       .tray { display: flex; flex: 1; align-items: center; gap: 5px; padding-left: 9px; white-space: nowrap; }
       time { flex: 1; text-align: center; font-size: 8px; line-height: 11px; padding-right: 12px; color: #fff; }
       sup { font-size: 9px; line-height: 9px; margin-bottom: 6px; }
       i { border: 3px solid transparent; border-bottom: 3px solid #fff; border-top: 0; }`,
      apps.map(a => `<button type="button" aria-label="${a}" class="${a} ${open.includes(a) ? "open" : ""}"><ui-icon name="${a}"></ui-icon></button>`).join("") +
      `<div class="tray"><span>桌面</span><sup>»</sup><i></i><time datetime="2010-01-12T16:19">16:19<br>2010-01-12</time></div>`
    );
  }
}
customElements.define("task-bar", TaskBar);

class ForumMark extends Base {
  connectedCallback() {
    this.draw(
      `:host { display: flex; width: 210px; height: 67px; background: #c9ccd83d; pointer-events: none; }
       svg { width: 60px; height: 62px; flex: none; margin-top: 2px; }
       .txt { flex: 1; white-space: nowrap; }
       strong { display: block; font: 900 29px/38px "Noto Sans CJK SC", sans-serif; color: #2d8465c0; padding-left: 10px; }
       span { display: block; font: 16px/20px "Liberation Sans", sans-serif; color: #9cc3a866; margin-left: -4px; }`,
      `<svg viewBox="0 0 60 62" fill="none" stroke-width="4">
         <path d="M36 39C34 18 18 4 8 8-2 13 4 33 14 36" stroke="#1b2c6199"/>
         <path d="M30 48c-8 8 12 20 18 2 8-20 8-34 0-32-9 3-13 10-14 18" stroke="#b22c3d99"/>
         <path d="M13 38c14-2 34 6 24 16M34 38c-8-2-10 6-12 10" stroke="#7f90a999"/>
       </svg>
       <div class="txt"><strong>野火论坛</strong><span>www.proewildfire.cn</span></div>`
    );
  }
}
customElements.define("forum-mark", ForumMark);

class DeskTop extends Base {
  connectedCallback() {
    this.draw(
      `:host { display: flex; flex-direction: column; height: 100vh; position: relative; }
       .win { flex: 1; min-height: 0; }
       .mark { position: absolute; right: 0; bottom: 0; }`,
      `<div class="win"><slot name="window"></slot></div><slot name="bar"></slot><div class="mark"><slot name="mark"></slot></div>`
    );
  }
}
customElements.define("desk-top", DeskTop);
</script>
</body>
</html>
